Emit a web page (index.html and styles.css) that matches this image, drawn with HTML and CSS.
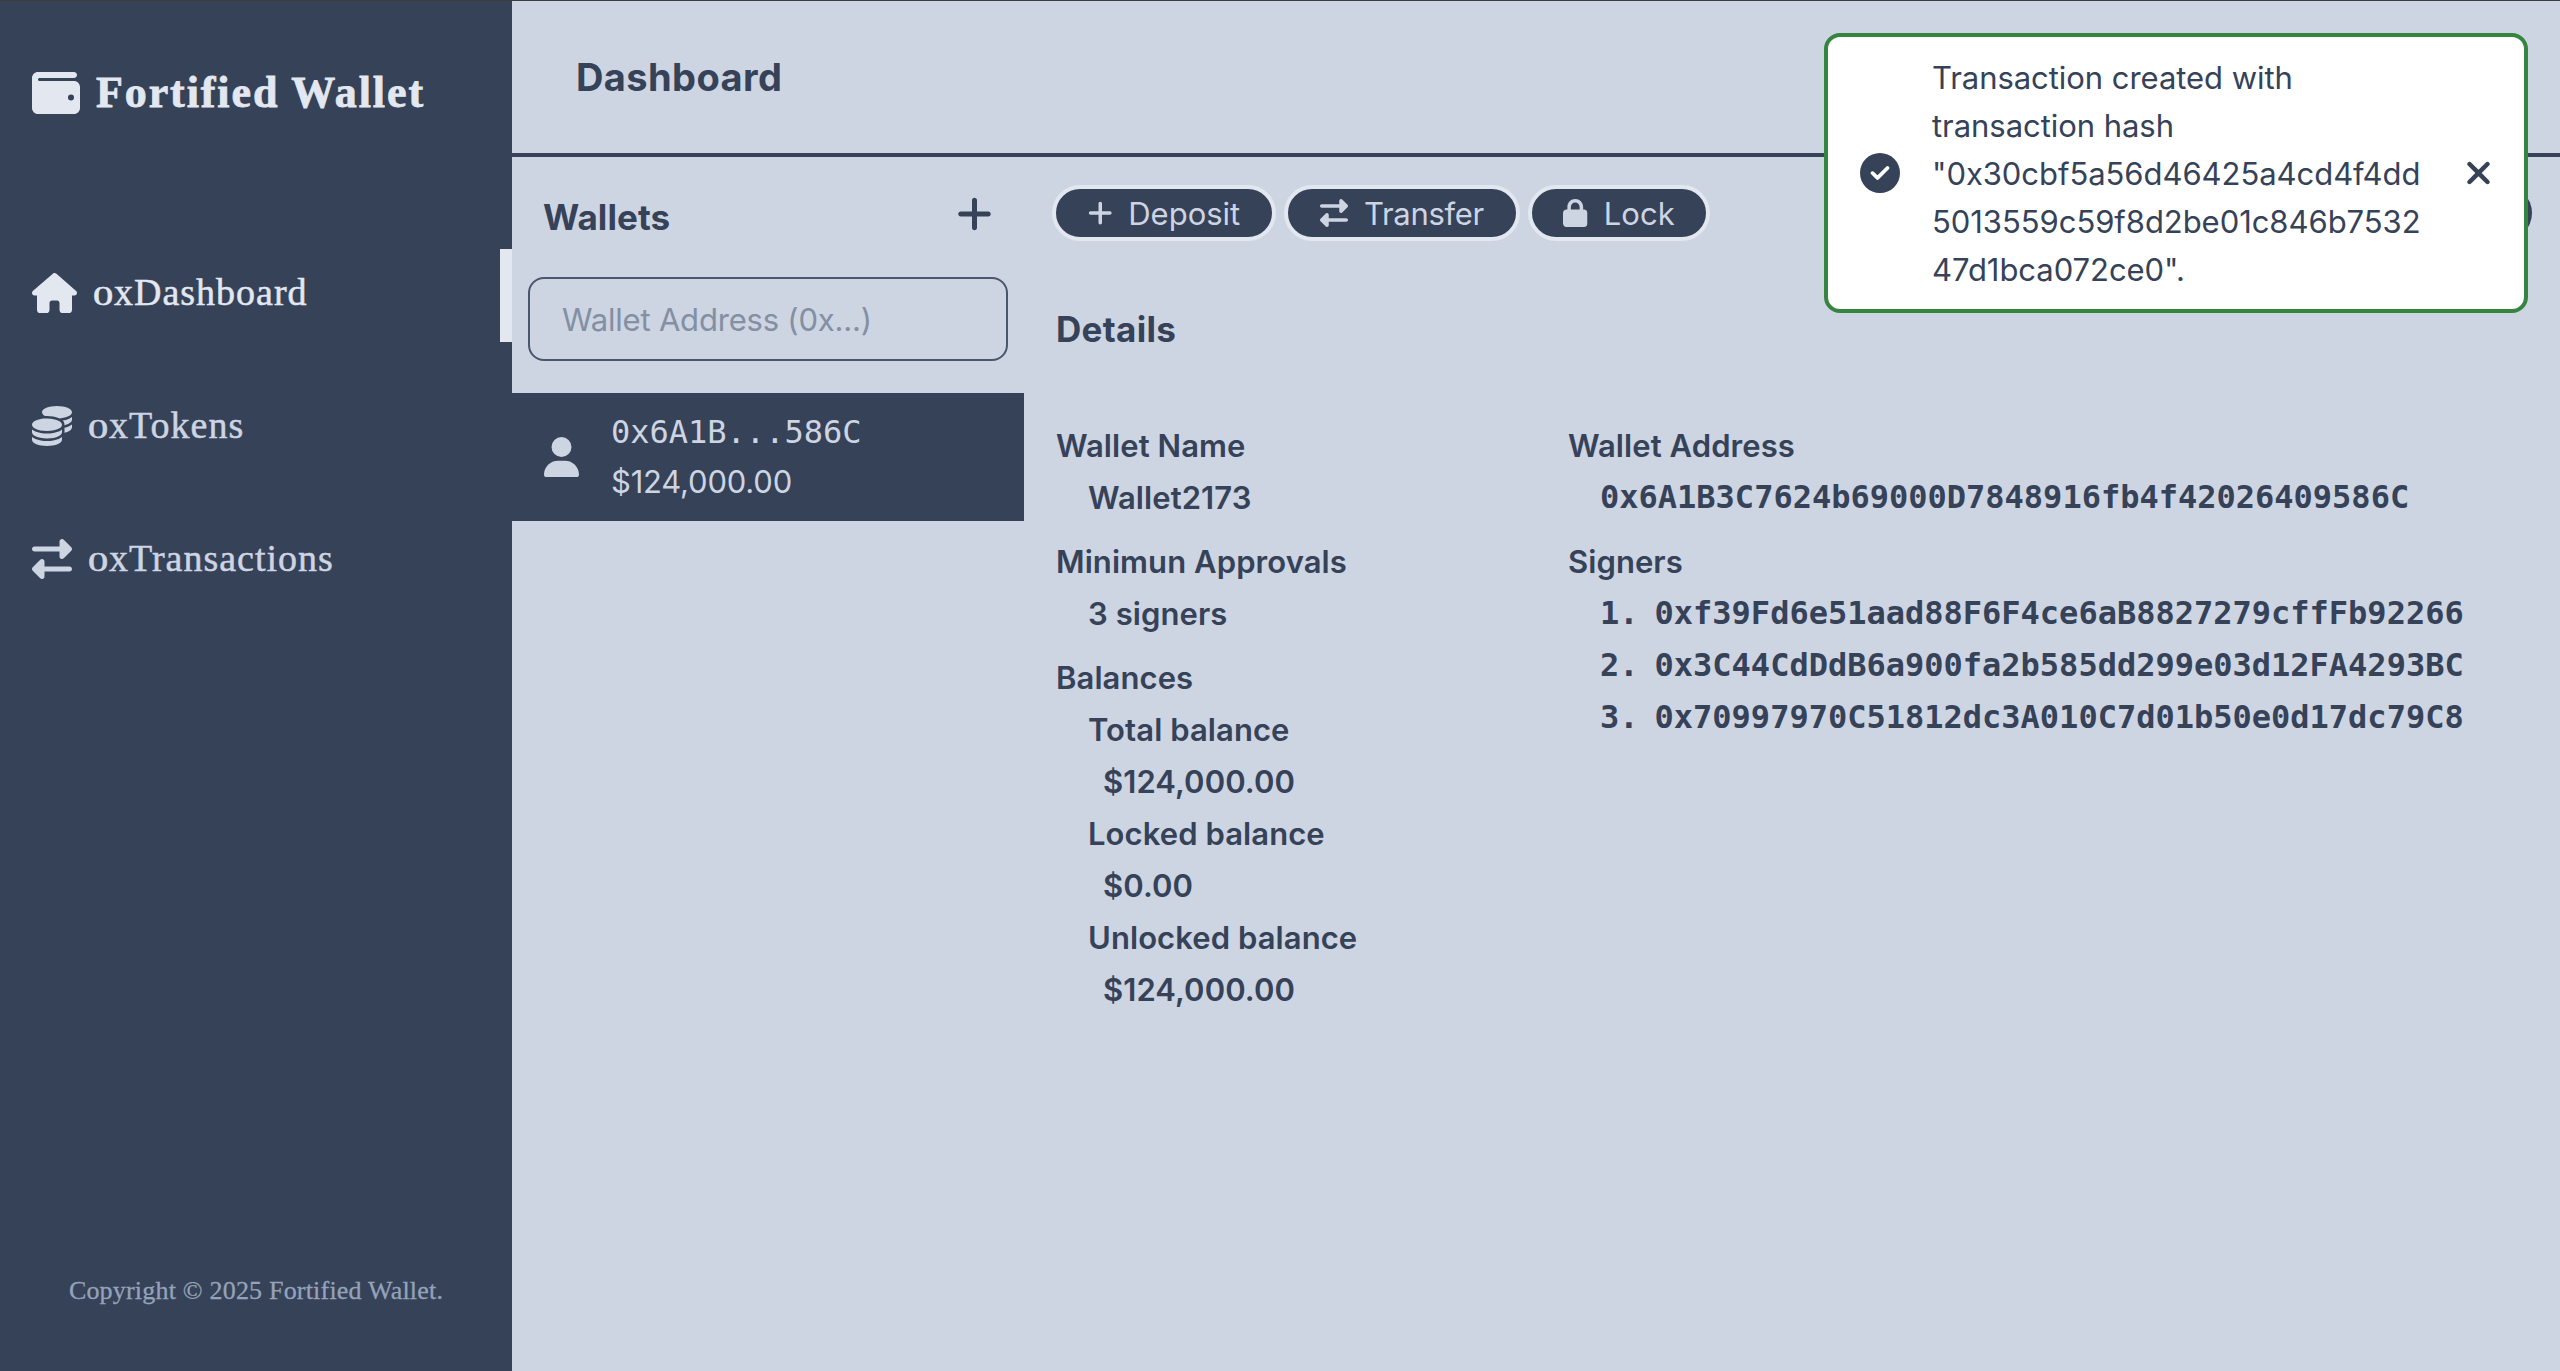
FILE: index.html
```
<!DOCTYPE html>
<html lang="en">
<head>
<meta charset="utf-8">
<title>Fortified Wallet</title>
<link rel="stylesheet" href="styles.css">
</head>
<body>
<svg class="sprite" aria-hidden="true">
  <symbol id="wallet" viewBox="0 0 512 512"><path d="M64 32C28.7 32 0 60.7 0 96V416c0 35.3 28.7 64 64 64H448c35.3 0 64-28.7 64-64V192c0-35.3-28.7-64-64-64H80c-8.8 0-16-7.2-16-16s7.2-16 16-16H448c17.7 0 32-14.3 32-32s-14.3-32-32-32H64zM416 272a32 32 0 1 1 0 64 32 32 0 1 1 0-64z"/></symbol>
  <symbol id="house" viewBox="0 0 576 512"><path d="M575.8 255.5c0 18-15 32.1-32 32.1h-32l.7 160.2c0 2.7-.2 5.4-.5 8.1V472c0 22.1-17.9 40-40 40H456c-1.1 0-2.2 0-3.3-.1c-1.4 .1-2.8 .1-4.2 .1H416 392c-22.1 0-40-17.9-40-40V448 384c0-17.7-14.3-32-32-32H256c-17.7 0-32 14.3-32 32v64 24c0 22.1-17.9 40-40 40H160 128.1c-1.5 0-3-.1-4.5-.2c-1.2 .1-2.4 .2-3.6 .2H104c-22.1 0-40-17.9-40-40V360c0-.9 0-1.9 .1-2.8V287.6H32c-18 0-32-14-32-32.1c0-9 3-17 10-24L266.4 8c7-7 15-8 22-8s15 2 21 7L564.8 231.5c8 7 12 15 11 24z"/></symbol>
  <symbol id="coins" viewBox="0 0 512 512"><path d="M512 80c0 18-14.3 34.6-38.4 48c-29.1 16.1-72.5 27.5-122.3 30.9c-3.7-1.8-7.4-3.5-11.3-5C300.6 137.4 248.2 128 192 128c-8.3 0-16.4 .2-24.5 .6l-1.1-.6C142.3 114.6 128 98 128 80c0-44.2 86-80 192-80S512 35.8 512 80zM160.7 161.1c10.2-.7 20.7-1.1 31.3-1.1c62.2 0 117.4 12.3 152.5 31.4C369.3 204.9 384 221.7 384 240c0 4-.7 7.9-2.1 11.7c-4.6 13.2-17 25.3-35 35.5c-.1 .1-.3 .1-.4 .2c-.3 .2-.6 .3-.9 .5c-35 19.4-90.8 32-153.6 32c-59.6 0-112.9-11.3-148.2-29.1c-1.9-.9-3.7-1.9-5.5-2.9C14.3 274.6 0 258 0 240c0-34.8 53.4-64.5 128-75.4c10.5-1.5 21.4-2.7 32.7-3.5zM416 240c0-21.9-10.6-39.9-24.1-53.4c28.3-4.4 54.2-11.4 76.2-20.5c16.3-6.8 31.5-15.2 43.9-25.5V176c0 19.3-16.5 37.1-43.8 50.9c-14.6 7.4-32.4 13.7-52.4 18.5c.1-1.8 .2-3.5 .2-5.3zm-32 96c0 18-14.3 34.6-38.4 48c-1.8 1-3.6 1.9-5.5 2.9C304.9 404.7 251.6 416 192 416c-62.8 0-118.6-12.6-153.6-32C14.3 370.6 0 354 0 336V300.6c12.5 10.3 27.6 18.7 43.9 25.5C83.4 342.6 135.8 352 192 352s108.6-9.4 148.1-25.9c7.8-3.2 15.3-6.9 22.4-10.9c6.1-3.4 11.8-7.2 17.2-11.2c1.5-1.1 2.9-2.3 4.3-3.4V304v5.7V336zm32 0V304 278.1c19-4.2 36.5-9.5 52.1-16c16.3-6.8 31.5-15.2 43.9-25.5V272c0 10.5-5 21-14.9 30.9c-16.3 16.3-45 29.7-81.3 38.4c.1-1.7 .2-3.5 .2-5.3zM192 448c56.2 0 108.6-9.4 148.1-25.9c16.3-6.8 31.5-15.2 43.9-25.5V432c0 44.2-86 80-192 80S0 476.2 0 432V396.6c12.5 10.3 27.6 18.7 43.9 25.5C83.4 438.6 135.8 448 192 448z"/></symbol>
  <symbol id="right-left" viewBox="0 0 512 512"><path d="M32 96l320 0V32c0-12.9 7.8-24.6 19.8-29.6s25.7-2.2 34.9 6.9l96 96c6 6 9.4 14.1 9.4 22.6s-3.4 16.6-9.4 22.6l-96 96c-9.2 9.2-22.9 11.9-34.9 6.9s-19.8-16.6-19.8-29.6V160L32 160c-17.7 0-32-14.3-32-32s14.3-32 32-32zM480 352c17.7 0 32 14.3 32 32s-14.3 32-32 32H160v64c0 12.9-7.8 24.6-19.8 29.6s-25.7 2.2-34.9-6.9l-96-96c-6-6-9.4-14.1-9.4-22.6s3.4-16.6 9.4-22.6l96-96c9.2-9.2 22.9-11.9 34.9-6.9s19.8 16.6 19.8 29.6l0 64H480z"/></symbol>
  <symbol id="plus" viewBox="0 0 448 512"><path d="M256 80c0-17.7-14.3-32-32-32s-32 14.3-32 32V224H48c-17.7 0-32 14.3-32 32s14.3 32 32 32H192V432c0 17.7 14.3 32 32 32s32-14.3 32-32V288H400c17.7 0 32-14.3 32-32s-14.3-32-32-32H256V80z"/></symbol>
  <symbol id="lock" viewBox="0 0 448 512"><path d="M144 144v48H304V144c0-44.2-35.8-80-80-80s-80 35.8-80 80zM80 192V144C80 64.5 144.5 0 224 0s144 64.5 144 144v48h16c35.3 0 64 28.7 64 64V448c0 35.3-28.7 64-64 64H64c-35.3 0-64-28.7-64-64V256c0-35.3 28.7-64 64-64H80z"/></symbol>
  <symbol id="user" viewBox="0 0 448 512"><path d="M224 256A128 128 0 1 0 224 0a128 128 0 1 0 0 256zm-45.7 48C79.8 304 0 383.8 0 482.3C0 498.7 13.3 512 29.7 512H418.3c16.4 0 29.7-13.3 29.7-29.7C448 383.8 368.2 304 269.7 304H178.3z"/></symbol>
  <symbol id="circle-check" viewBox="0 0 512 512"><path d="M256 512A256 256 0 1 0 256 0a256 256 0 1 0 0 512zM369 209L241 337c-9.4 9.4-24.6 9.4-33.9 0l-64-64c-9.4-9.4-9.4-24.6 0-33.9s24.6-9.4 33.9 0l47 47L335 175c9.4-9.4 24.6-9.4 33.9 0s9.4 24.6 0 33.9z"/></symbol>
  <symbol id="xmark" viewBox="0 0 384 512"><path d="M342.6 150.6c12.5-12.5 12.5-32.8 0-45.3s-32.8-12.5-45.3 0L192 210.7 86.6 105.4c-12.5-12.5-32.8-12.5-45.3 0s-12.5 32.8 0 45.3L146.7 256 41.4 361.4c-12.5 12.5-12.5 32.8 0 45.3s32.8 12.5 45.3 0L192 301.3 297.4 406.6c12.5 12.5 32.8 12.5 45.3 0s12.5-32.8 0-45.3L237.3 256 342.6 150.6z"/></symbol>
</svg>

<div class="app">
  <aside class="sidebar">
    <div class="brand"><svg class="icon brand-icon"><use href="#wallet"/></svg><span>Fortified Wallet</span></div>
    <nav class="nav">
      <a class="nav-item active"><svg class="icon icon-house"><use href="#house"/></svg><span class="nav-label"><span class="zero">0</span>xDashboard</span></a>
      <a class="nav-item"><svg class="icon icon-md"><use href="#coins"/></svg><span class="nav-label"><span class="zero">0</span>xTokens</span></a>
      <a class="nav-item"><svg class="icon icon-md"><use href="#right-left"/></svg><span class="nav-label"><span class="zero">0</span>xTransactions</span></a>
    </nav>
    <footer class="copyright">Copyright © 2025 Fortified Wallet.</footer>
  </aside>

  <div class="content">
    <header class="header"><h1>Dashboard</h1></header>
    <div class="columns">
      <section class="wallets">
        <div class="wallets-head"><h2>Wallets</h2><svg class="icon add-icon"><use href="#plus"/></svg></div>
        <input class="search" type="text" placeholder="Wallet Address (0x...)">
        <div class="wallet">
          <svg class="icon user-icon"><use href="#user"/></svg>
          <div><div class="mono">0x6A1B...586C</div><div>$124,000.00</div></div>
        </div>
      </section>

      <main class="panel">
        <div class="actions">
          <button class="pill deposit"><svg class="icon icon-slim"><use href="#plus"/></svg>Deposit</button>
          <button class="pill transfer"><svg class="icon icon-sm"><use href="#right-left"/></svg>Transfer</button>
          <button class="pill lock"><svg class="icon icon-slim"><use href="#lock"/></svg>Lock</button>
          <span class="pill-end"></span>
        </div>
        <h2 class="details-title">Details</h2>
        <div class="details">
          <div>
            <div class="group">
              <div>Wallet Name</div>
              <div class="indent">Wallet2173</div>
            </div>
            <div class="group">
              <div>Minimun Approvals</div>
              <div class="indent">3 signers</div>
            </div>
            <div class="group">
              <div>Balances</div>
              <div class="indent">
                <div>Total balance</div><div class="amount">$124,000.00</div>
                <div>Locked balance</div><div class="amount">$0.00</div>
                <div>Unlocked balance</div><div class="amount">$124,000.00</div>
              </div>
            </div>
          </div>
          <div>
            <div class="group">
              <div>Wallet Address</div>
              <div class="indent mono">0x6A1B3C7624b69000D7848916fb4f42026409586C</div>
            </div>
            <div class="group">
              <div>Signers</div>
              <div class="indent mono">
                <div class="signer"><span>1.</span><span>0xf39Fd6e51aad88F6F4ce6aB8827279cffFb92266</span></div>
                <div class="signer"><span>2.</span><span>0x3C44CdDdB6a900fa2b585dd299e03d12FA4293BC</span></div>
                <div class="signer"><span>3.</span><span>0x70997970C51812dc3A010C7d01b50e0d17dc79C8</span></div>
              </div>
            </div>
          </div>
        </div>
      </main>
    </div>
  </div>
</div>

<div class="toast">
  <svg class="icon icon-md"><use href="#circle-check"/></svg>
  <p>Transaction created with<br>transaction hash<br>"0x30cbf5a56d46425a4cd4f4dd<br>5013559c59f8d2be01c846b7532<br>47d1bca072ce0".</p>
  <svg class="icon close-icon"><use href="#xmark"/></svg>
</div>
</body>
</html>
```

FILE: styles.css
```
:root {
  --dark: #364258;
  --light: #cdd4e2;
  --bright: #e2e7f0;
  --muted: #95a2b9;
}

* { box-sizing: border-box; }

body {
  margin: 0;
  height: 1371px;
  overflow: hidden;
  border-top: 1px solid #3d3d3f;
  background: var(--light);
  color: var(--dark);
  font: 31px "Inter", sans-serif;
  letter-spacing: -.2px;
}

h1, h2, p { margin: 0; }
.sprite { display: none; }
.icon { display: block; flex: none; fill: currentColor; }
.icon-md { width: 40px; height: 40px; }
.icon-sm { width: 28px; height: 28px; }
.icon-slim { width: 24.5px; height: 28px; }
.mono { font-family: "DejaVu Sans Mono", monospace; font-size: 32px; letter-spacing: 0; }

.app { display: flex; height: 100%; }

/* Sidebar */
.sidebar {
  display: flex;
  flex-direction: column;
  width: 512px;
  background: var(--dark);
  color: var(--light);
  font-family: "Liberation Serif", serif;
}
.brand {
  display: flex;
  align-items: center;
  gap: 16px;
  height: 184px;
  padding-left: 32px;
  color: var(--bright);
  font-size: 44px;
  font-weight: 700;
  letter-spacing: 1.9px;
  -webkit-text-stroke: .8px currentColor;
}
.brand span { padding-bottom: 2px; }
.brand-icon { width: 48px; height: 48px; }
.nav {
  display: flex;
  flex-direction: column;
  gap: 40px;
  margin-top: 64px;
  font-size: 38px;
  letter-spacing: 1px;
}
.nav-item {
  display: flex;
  align-items: center;
  gap: 16px;
  height: 93px;
  padding: 0 0 5px 32px;
}
.nav-label { padding-bottom: 2px; -webkit-text-stroke: .5px currentColor; }
.nav-item.active { border-right: 12px solid var(--bright); color: var(--bright); }
.icon-house { width: 45px; height: 40px; }
.zero {
  display: inline-block;
  width: 21px;
  font-size: 27px;
  letter-spacing: 0;
  transform: scaleX(1.5);
  transform-origin: left;
}
.copyright {
  margin-top: auto;
  padding-bottom: 62px;
  color: var(--muted);
  font-size: 26px;
  line-height: 36px;
  letter-spacing: .2px;
  text-align: center;
  -webkit-text-stroke: .3px currentColor;
}

/* Header */
.content { flex: 1; display: flex; flex-direction: column; }
.header {
  display: flex;
  align-items: center;
  height: 156px;
  padding: 0 0 1px 64px;
  border-bottom: 4px solid var(--dark);
}
h1 { font-size: 38px; font-weight: 700; letter-spacing: .4px; }
h2 { font-size: 35px; font-weight: 700; letter-spacing: .1px; }
.columns { display: flex; flex: 1; }

/* Wallet list */
.wallets { width: 512px; }
.wallets-head {
  display: flex;
  align-items: center;
  justify-content: space-between;
  height: 120px;
  padding: 0 32px;
}
.wallets-head h2 { margin-left: -1px; }
.add-icon { width: 35px; height: 40px; margin-bottom: 6px; }
.search {
  display: block;
  width: 480px;
  height: 84px;
  margin: 0 16px 32px;
  padding: 0 32px;
  border: 2px solid #49566d;
  border-radius: 16px;
  background: transparent;
  font: inherit;
  letter-spacing: -.2px;
}
.search::placeholder { color: #838fa2; opacity: 1; }
.wallet {
  display: flex;
  align-items: center;
  gap: 32px;
  height: 128px;
  padding-left: 32px;
  background: var(--dark);
  color: var(--light);
  line-height: 50px;
}
.user-icon { width: 35px; height: 40px; }

/* Wallet panel */
.panel { flex: 1; padding: 28px 28px 0; }
.actions { display: flex; gap: 8px; }
.pill {
  display: flex;
  align-items: center;
  justify-content: center;
  gap: 16px;
  height: 56px;
  padding: 0;
  border: 4px solid var(--bright);
  border-radius: 28px;
  background: var(--dark);
  color: var(--light);
  font: inherit;
}
.deposit { width: 224px; }
.transfer { width: 236px; letter-spacing: -.3px; }
.lock { width: 182px; }
.pill-end { width: 56px; height: 56px; margin-left: auto; border-radius: 28px; background: var(--dark); }
.details-title { margin: 64px 0 67px 4px; line-height: 48px; letter-spacing: .3px; }
.details {
  display: grid;
  grid-template-columns: 512px 1fr;
  padding-left: 4px;
  font-weight: 600;
  line-height: 52px;
  letter-spacing: .08px;
}
.group { margin-bottom: 12px; }
.indent { padding-left: 32px; }
.indent.mono { margin: -1px 0 13px; font-weight: 700; letter-spacing: 0; }
.amount { padding-left: 15px; }
.signer { display: flex; gap: 16px; }

/* Notification */
.toast {
  position: absolute;
  top: 33px;
  right: 32px;
  display: flex;
  align-items: center;
  width: 704px;
  height: 280px;
  padding: 0 32px;
  border: 4px solid #35843f;
  border-radius: 16px;
  background: #fff;
  line-height: 48px;
  letter-spacing: -.05px;
}
.toast p { flex: 1; margin-left: 32px; padding-top: 2px; }
.close-icon { width: 27px; height: 36px; }
```
